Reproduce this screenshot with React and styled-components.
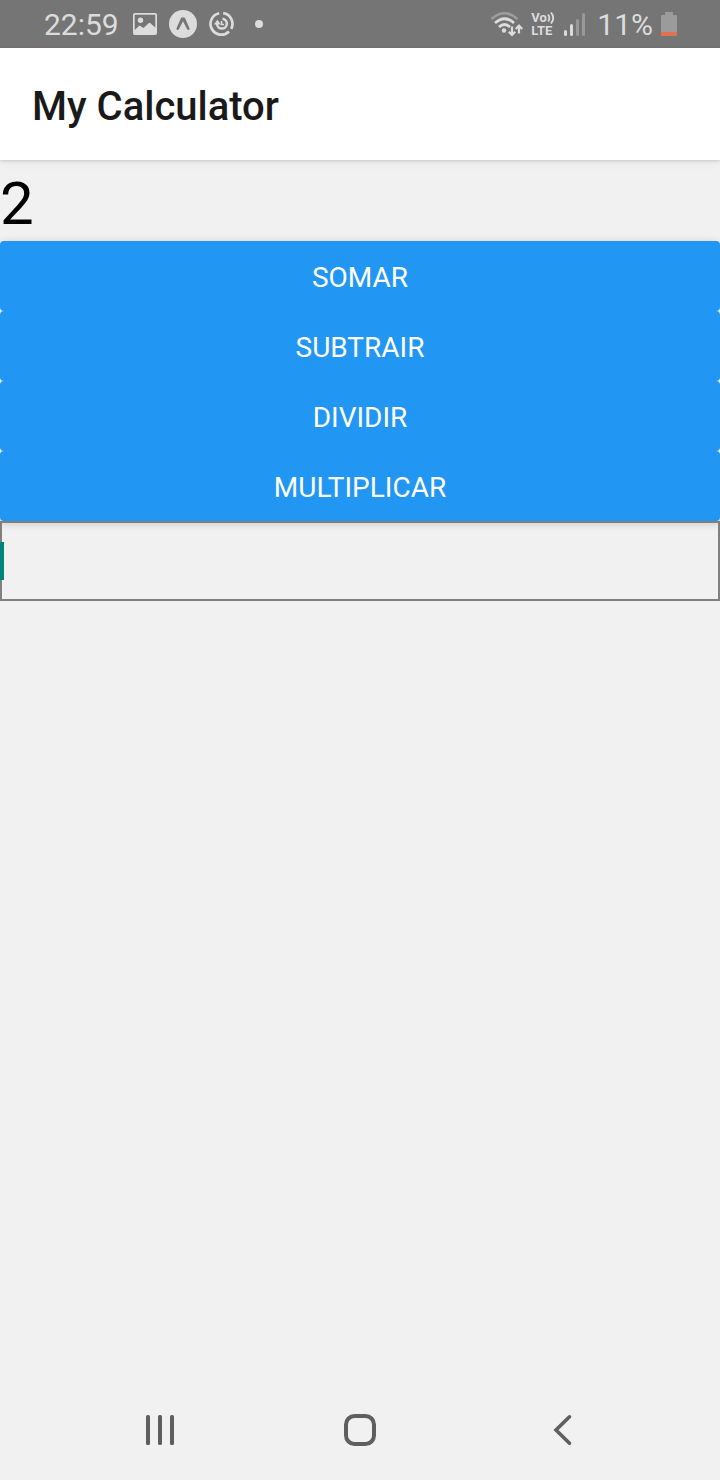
import React, { useState } from "react";
import styled, { createGlobalStyle } from "styled-components";

const GlobalStyle = createGlobalStyle`
  *, *::before, *::after { box-sizing: border-box; }
  body {
    margin: 0;
    background: #f1f1f1;
    font-family: Roboto, "Liberation Sans", sans-serif;
  }
`;

const Screen = styled.div`
  display: flex;
  flex-direction: column;
  min-height: 100vh;
  background: #f1f1f1;
`;

const StatusBar = styled.div`
  display: flex;
  align-items: center;
  justify-content: space-between;
  height: 48px;
  padding: 0 43px 0 44px;
  background: #757575;
  color: #dcdcdc;
`;

const StatusGroup = styled.div`
  display: flex;
  align-items: center;
  gap: ${(p) => p.$gap}px;

  svg { display: block; flex: none; }
`;

const StatusText = styled.span`
  padding: 2px ${(p) => p.$after || 0}px 0 ${(p) => p.$before || 0}px;
  font-size: 30px;
  line-height: 48px;
`;

const Dot = styled.span`
  width: 8px;
  height: 8px;
  margin-left: 8px;
  border-radius: 50%;
  background: #dcdcdc;
`;

const Volte = styled.span`
  display: flex;
  flex-direction: column;
  width: 25px;
  font-size: 13px;
  font-weight: 700;
  line-height: 13px;
`;

const VolteRow = styled.span`
  display: flex;
  align-items: center;
`;

const Header = styled.header`
  position: relative;
  display: flex;
  align-items: center;
  height: 112px;
  padding: 6px 32px 0;
  background: #ffffff;
  box-shadow: 0 1px 3px rgba(0, 0, 0, 0.14), 0 2px 10px rgba(0, 0, 0, 0.06);
`;

const Title = styled.h1`
  margin: 0;
  color: #1a1a1a;
  font-size: 40px;
  font-weight: 500;
  line-height: 48px;
`;

const Main = styled.main`
  flex: 1;
  display: flex;
  flex-direction: column;
`;

const Result = styled.output`
  display: block;
  padding-top: 7px;
  color: #000000;
  font-size: 60px;
  line-height: 74px;
`;

const Operations = styled.div`
  display: flex;
  flex-direction: column;
  border-radius: 4px;
  box-shadow: 0 2px 8px rgba(0, 0, 0, 0.2);
`;

const OperationButton = styled.button`
  height: 70px;
  padding: 4px 16px 0;
  border: 0;
  border-radius: 4px;
  background: #2196f3;
  color: #ffffff;
  font: 400 28px/40px Roboto, "Liberation Sans", sans-serif;
  text-transform: uppercase;
`;

const Field = styled.label`
  position: relative;
  display: flex;
  height: 80px;
`;

const NumberInput = styled.input`
  width: 100%;
  padding: 0 4px;
  border: 2px solid #808080;
  border-radius: 0;
  outline: 0;
  background: transparent;
  caret-color: transparent;
  color: #000000;
  font: 400 28px/38px Roboto, "Liberation Sans", sans-serif;
`;

const Caret = styled.span`
  position: absolute;
  top: 21px;
  left: 0;
  width: 4px;
  height: 38px;
  background: #008577;
`;

const NavBar = styled.nav`
  display: grid;
  grid-template-columns: repeat(3, 1fr);
  height: 100px;
  padding: 0 60px;
`;

const NavButton = styled.button`
  display: flex;
  align-items: center;
  justify-content: center;
  padding: 0;
  border: 0;
  background: none;
  color: #5f5f5f;
`;

const operations = ["Somar", "Subtrair", "Dividir", "Multiplicar"];

const ImageIcon = () => (
  <svg width="24" height="22" viewBox="0 0 24 22" aria-hidden="true">
    <path
      fill="currentColor"
      fillRule="evenodd"
      d="M2 0H22Q24 0 24 2V20Q24 22 22 22H2Q0 22 0 20V2Q0 0 2 0ZM1.700 1.700V17L6.500 12.500L10.500 15L16.500 9.500L22.300 14.500V1.700Z"
    />
    <circle cx="7.500" cy="7.300" r="2.700" fill="currentColor" />
  </svg>
);

const ExpoIcon = () => (
  <svg width="28" height="28" viewBox="0 0 28 28" aria-hidden="true">
    <circle cx="14" cy="14" r="14" fill="currentColor" />
    <path
      fill="#757575"
      d="M12.800 7.600H15.200Q15.800 7.600 16.100 8.300L20.500 18.200Q20.800 19.300 19.800 19.900Q18.700 20.300 18 19.100L14 11.200L10 19.100Q9.300 20.300 8.200 19.900Q7.200 19.300 7.500 18.200L11.900 8.300Q12.200 7.600 12.800 7.600Z"
    />
  </svg>
);

const SyncIcon = () => (
  <svg width="26" height="26" viewBox="0 0 26 26" fill="none" stroke="currentColor" aria-hidden="true">
    <path d="M10.200 2.300A10.800 10.800 0 1 0 20 20.500" strokeWidth="2.700" />
    <path d="M14.200 2.200A10.800 10.800 0 0 1 22.200 17.900" strokeWidth="2.700" />
    <path d="M13.500 7.800A4.900 4.900 0 1 1 8 13" strokeWidth="2.500" />
    <path d="M4.800 13.500L8.400 8.700L11.800 13.500Z" fill="currentColor" stroke="none" />
    <path d="M12.500 10V13.500H15" strokeWidth="1.600" />
  </svg>
);

const WifiIcon = () => (
  <svg width="32" height="26" viewBox="0 0 32 26" fill="none" stroke="currentColor" aria-hidden="true">
    <path d="M0.500 8Q13.500 -3.500 26.500 8" strokeWidth="2.600" opacity="0.4" />
    <path d="M4 12Q13.500 3.500 23 12" strokeWidth="2.800" />
    <path d="M8 16Q13.500 11 19 16" strokeWidth="2.800" />
    <circle cx="13" cy="19.500" r="2.200" fill="currentColor" stroke="none" />
    <path d="M21 15.500V24M17.800 20.700L21 24L24.200 20.700M28 22.500V14.500M24.800 18L28 14.700L31.200 18" strokeWidth="2.200" />
  </svg>
);

const WavesIcon = () => (
  <svg width="8" height="12" viewBox="0 0 8 12" fill="none" stroke="currentColor" strokeWidth="1.800" aria-hidden="true">
    <path d="M1 2.500Q3.800 6 1 9.500M4 0.500Q8.500 6 4 11.500" />
  </svg>
);

const SignalIcon = () => (
  <svg width="22" height="24" viewBox="0 0 22 24" fill="currentColor" aria-hidden="true">
    <rect x="0" y="18" width="3" height="6" rx="1.500" />
    <rect x="6" y="12" width="3" height="12" rx="1.500" />
    <rect x="12" y="7" width="3" height="17" rx="1.500" opacity="0.35" />
    <rect x="18" y="1" width="3" height="23" rx="1.500" opacity="0.35" />
  </svg>
);

const BatteryIcon = () => (
  <svg width="16" height="24" viewBox="0 0 16 24" aria-hidden="true">
    <path d="M4 0H12V3H15Q16 3 16 4V20H0V4Q0 3 1 3H4Z" fill="#9b9b9b" />
    <path d="M0 20H16V23Q16 24 15 24H1Q0 24 0 23Z" fill="#e0734f" />
  </svg>
);

const RecentsIcon = () => (
  <svg width="32" height="32" viewBox="0 0 32 32" fill="currentColor" aria-hidden="true">
    <rect x="2" y="1" width="4" height="30" rx="1.500" />
    <rect x="14" y="1" width="4" height="30" rx="1.500" />
    <rect x="26" y="1" width="4" height="30" rx="1.500" />
  </svg>
);

const HomeIcon = () => (
  <svg width="32" height="32" viewBox="0 0 32 32" fill="none" stroke="currentColor" strokeWidth="4" aria-hidden="true">
    <rect x="2" y="2" width="28" height="28" rx="8.500" />
  </svg>
);

const BackIcon = () => (
  <svg width="32" height="32" viewBox="0 0 32 32" fill="none" stroke="currentColor" strokeWidth="3.600" strokeLinecap="round" aria-hidden="true">
    <path d="M25.500 2.800L12 16L25.500 29.200" />
  </svg>
);

export default function App() {
  const [value, setValue] = useState("");

  return (
    <>
      <GlobalStyle />
      <Screen>
        <StatusBar>
          <StatusGroup $gap={12}>
            <StatusText $after={2}>22:59</StatusText>
            <ImageIcon />
            <ExpoIcon />
            <SyncIcon />
            <Dot />
          </StatusGroup>
          <StatusGroup $gap={8}>
            <WifiIcon />
            <Volte>
              <VolteRow>Vo<WavesIcon /></VolteRow>
              <VolteRow>LTE</VolteRow>
            </Volte>
            <SignalIcon />
            <StatusText $before={3}>11%</StatusText>
            <BatteryIcon />
          </StatusGroup>
        </StatusBar>
        <Header>
          <Title>My Calculator</Title>
        </Header>
        <Main>
          <Result>2</Result>
          <Operations>
            {operations.map((name) => (
              <OperationButton key={name} type="button">{name}</OperationButton>
            ))}
          </Operations>
          <Field>
            <NumberInput
              type="text"
              inputMode="decimal"
              aria-label="Número"
              value={value}
              onChange={(e) => setValue(e.target.value)}
            />
            {value === "" && <Caret />}
          </Field>
        </Main>
        <NavBar aria-label="System">
          <NavButton type="button" aria-label="Recents"><RecentsIcon /></NavButton>
          <NavButton type="button" aria-label="Home"><HomeIcon /></NavButton>
          <NavButton type="button" aria-label="Back"><BackIcon /></NavButton>
        </NavBar>
      </Screen>
    </>
  );
}
